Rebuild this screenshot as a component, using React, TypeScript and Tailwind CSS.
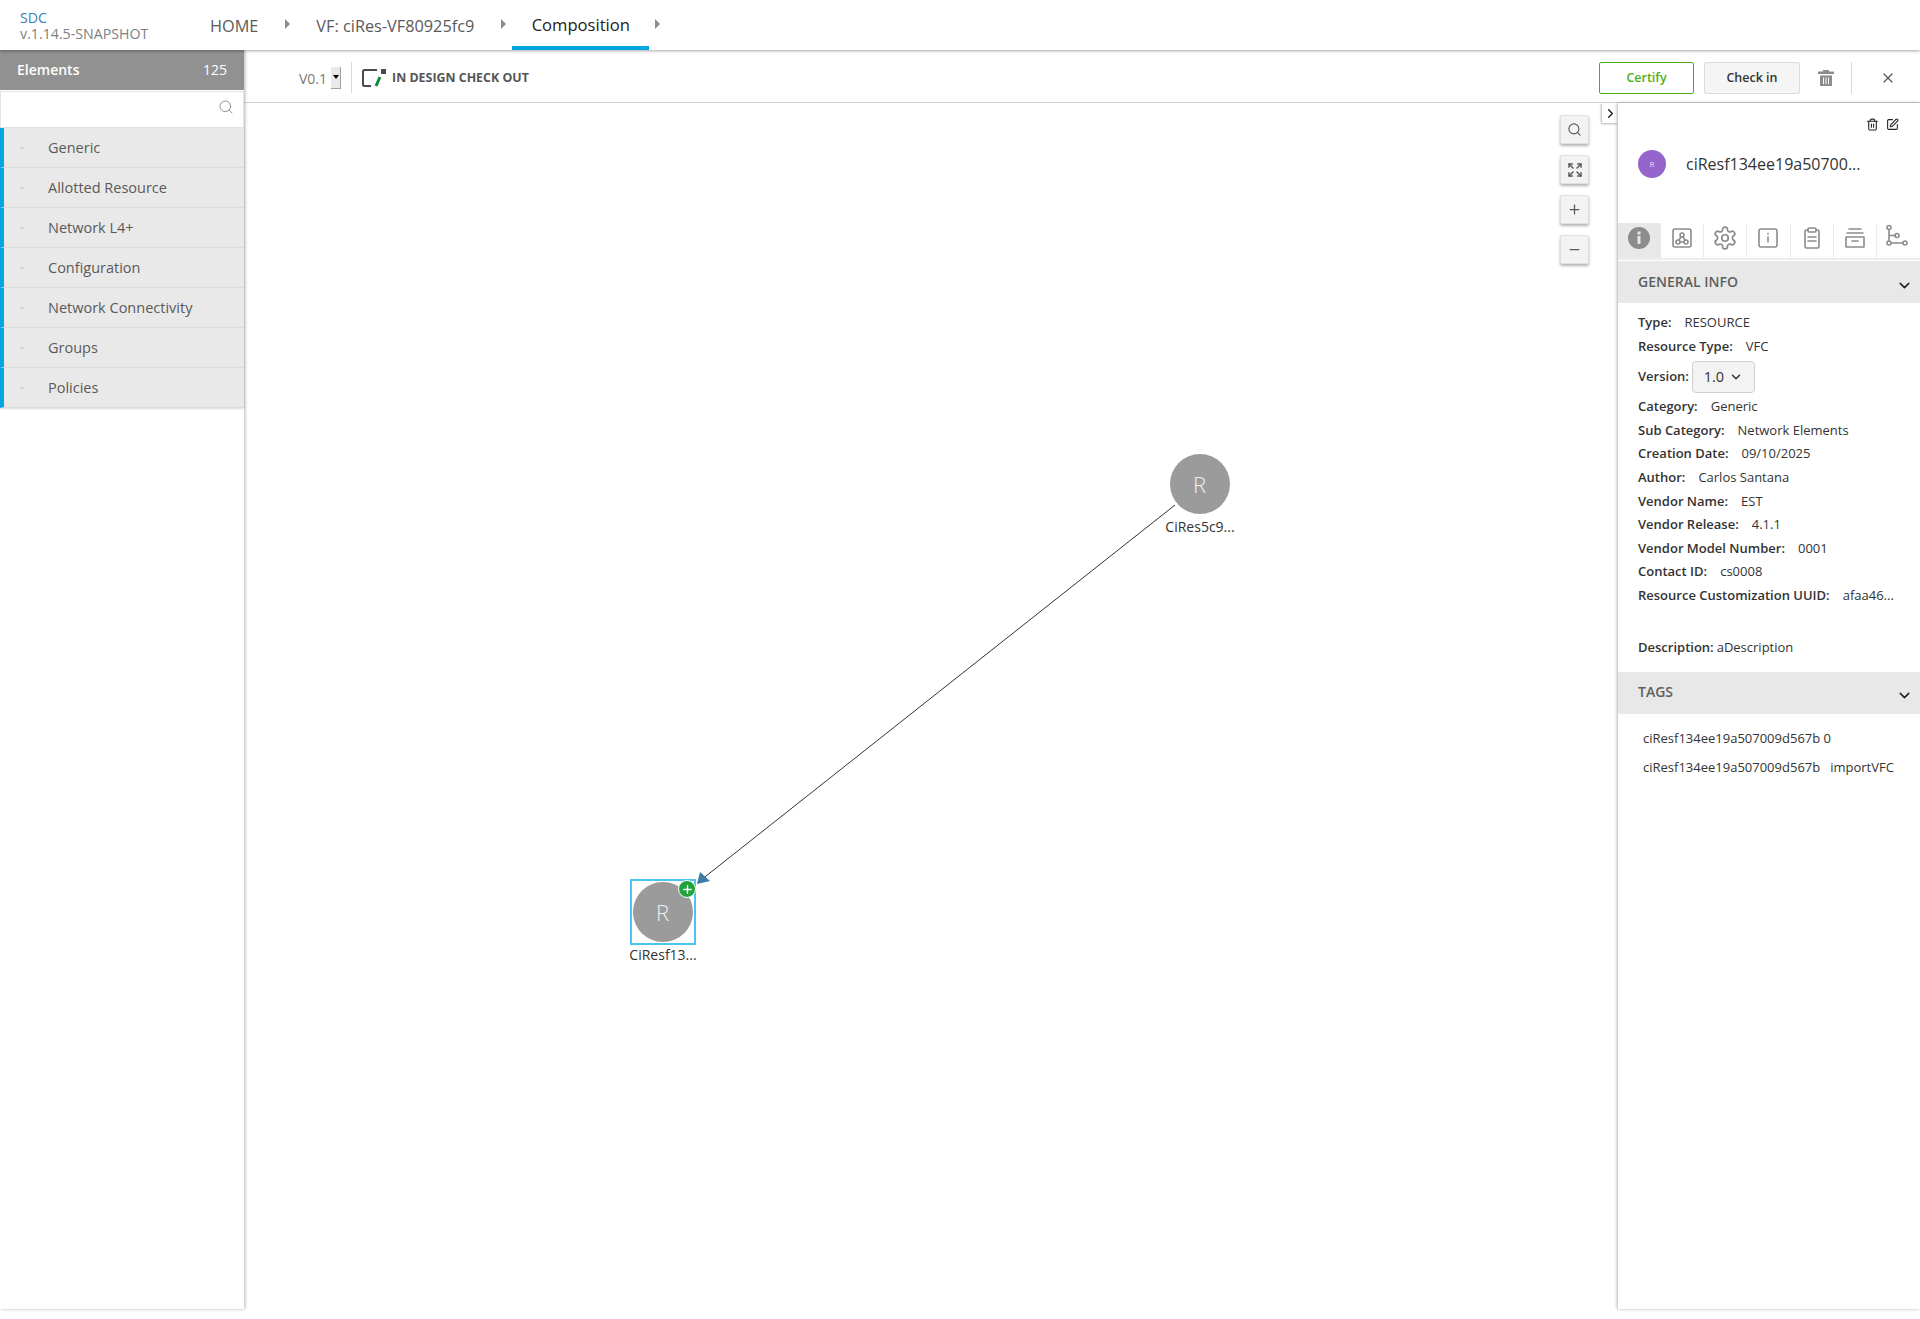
import { ChevronDown, ChevronRight, Search, Expand, Plus, Minus, Trash2, X, SquarePen } from "lucide-react";

const sections = ["Generic", "Allotted Resource", "Network L4+", "Configuration", "Network Connectivity", "Groups", "Policies"];

const info = [
  { label: "Type:", value: "RESOURCE" },
  { label: "Resource Type:", value: "VFC" },
  { label: "Version:", select: true },
  { label: "Category:", value: "Generic" },
  { label: "Sub Category:", value: "Network Elements" },
  { label: "Creation Date:", value: "09/10/2025" },
  { label: "Author:", value: "Carlos Santana" },
  { label: "Vendor Name:", value: "EST" },
  { label: "Vendor Release:", value: "4.1.1" },
  { label: "Vendor Model Number:", value: "0001" },
  { label: "Contact ID:", value: "cs0008" },
  { label: "Resource Customization UUID:", value: "afaa46..." },
];

function Caret() {
  return <span className="ml-[27px] mt-[-2px] h-0 w-0 border-y-[5px] border-l-[5px] border-y-transparent border-l-[#8c8c8c]"></span>;
}

function TabIcon({ children, size = 24 }: { children: React.ReactNode; size?: number }) {
  return (
    <svg width={size} height={size} viewBox="0 0 24 24" fill="none" stroke="#8c8c8c" strokeWidth="1.6" strokeLinecap="round" strokeLinejoin="round">
      {children}
    </svg>
  );
}

function ZoomButton({ children }: { children: React.ReactNode }) {
  return (
    <button className="flex h-[29px] w-[29px] items-center justify-center rounded-[2px] border border-[#e0e0e0] bg-[#f3f3f3] text-[#5a5a5a] shadow-[0_2px_3px_rgba(0,0,0,0.3)]">
      {children}
    </button>
  );
}

function SectionHeader({ title }: { title: string }) {
  return (
    <div className="flex h-[42px] items-center justify-between bg-[#e8e8e8] pl-5 pr-[7px]">
      <span className="mt-[-2px] text-[14px] font-semibold uppercase text-[#5f5f5f]">{title}</span>
      <ChevronDown className="mt-[6px] h-[17px] w-[17px] text-[#222222]" strokeWidth={2.2} />
    </div>
  );
}

function Node({ name, selected, className }: { name: string; selected?: boolean; className: string }) {
  return (
    <div className={`absolute flex w-[80px] flex-col items-center ${className}`}>
      <div className={`relative flex h-[66px] w-[66px] items-center justify-center ${selected ? "border-2 border-[#4cc4f2]" : ""}`}>
        <div className="flex h-[60px] w-[60px] items-center justify-center rounded-full bg-[#9b9b9b] pr-[1px] text-[22px] font-light text-[#f0f0f0]">R</div>
        {selected && (
          <span className="absolute right-[-2px] top-[-1px] flex h-[18px] w-[18px] items-center justify-center rounded-full border border-white bg-[#1fa33a] text-white">
            <Plus className="h-[13px] w-[13px]" strokeWidth={2.5} />
          </span>
        )}
      </div>
      <span className="text-[14px] leading-[20px] text-[#333333]">{name}</span>
    </div>
  );
}

export default function App() {
  return (
    <div className="flex h-[1319px] w-[1920px] flex-col overflow-hidden bg-white font-['Open_Sans',sans-serif] text-[13px] text-[#333333]">
      {/* top nav */}
      <header className="relative z-20 flex h-[50px] shrink-0 items-stretch bg-white shadow-[0_1px_3px_rgba(0,0,0,0.35)]">
        <div className="ml-5 w-[190px] pt-[10px] text-[14.2px] leading-[16px]">
          <div className="text-[#3b7fb8]">SDC</div>
          <div className="text-[#808080]">v.1.14.5-SNAPSHOT</div>
        </div>
        <div className="flex items-center text-[16.3px] text-[#5a5a5a]">
          <span className="mb-[-2px]">HOME</span>
          <Caret />
          <span className="mb-[-2px] ml-[26px]">VF: ciRes-VF80925fc9</span>
          <Caret />
        </div>
        <div className="ml-[6px] flex w-[137px] items-center justify-center border-b-4 border-[#00a4e0] pt-[5px] text-[16.6px] text-[#222222]">Composition</div>
        <div className="flex items-center">
          <span className="ml-[-21px]"></span>
          <Caret />
        </div>
      </header>

      <div className="flex min-h-0 flex-1 pb-[10px]">
        {/* elements palette */}
        <aside className="relative z-10 w-[244px] shrink-0 bg-white shadow-[1px_0_3px_rgba(0,0,0,0.3)]">
          <div className="flex h-[40px] items-center justify-between bg-[#919191] pb-[1px] pl-[17px] pr-[17px] text-[14px] font-semibold text-white">
            <span>Elements</span>
            <span className="font-normal">125</span>
          </div>
          <div className="mt-[1px] flex h-[37px] items-center justify-end border border-[#e4e4e4] bg-white pb-[6px] pr-[9px]">
            <Search className="h-[16px] w-[16px] text-[#8c8c8c]" strokeWidth={1.4} />
          </div>
          <div className="shadow-[0_1px_2px_rgba(0,0,0,0.15)]">
            {sections.map((s) => (
              <div key={s} className="flex h-[40px] items-center border-b border-l-4 border-b-[#dcdcdc] border-l-[#00a7e1] bg-[#e9e9e9] pl-[15px] text-[14.5px] text-[#5a5a5a]">
                <ChevronDown className="h-[6px] w-[6px] text-[#8c8c8c]" strokeWidth={2} />
                <span className="ml-[23px] font-medium">{s}</span>
              </div>
            ))}
          </div>
        </aside>

        <main className="flex min-w-0 flex-1 flex-col">
          {/* toolbar */}
          <div className="flex h-[53px] shrink-0 items-center border-b border-[#d2d2d2] bg-white pt-[3px]">
            <span className="ml-[55px] pt-[1px] text-[14px] text-[#7a7a7a]">V0.1</span>
            <span className="ml-[4px] flex h-[22px] w-[10px] items-center justify-center border-r border-b border-[#a0a0a0] bg-[#e9e9e9]">
              <span className="h-0 w-0 border-x-[3px] border-t-[4px] border-x-transparent border-t-black"></span>
            </span>
            <span className="ml-[10px] h-[31px] w-px bg-[#d8d8d8]"></span>
            <svg className="ml-[10px]" width="24" height="18" viewBox="0 0 24 18" fill="none">
              <path d="M9 17H2.5A1.5 1.5 0 0 1 1 15.5V2.5A1.5 1.5 0 0 1 2.5 1H15" stroke="#4a4a4a" strokeWidth="2" />
              <path d="M14 17l4-9" stroke="#0d8a3a" strokeWidth="3" />
              <rect x="19" y="0" width="5" height="5" fill="#4a4a4a" />
            </svg>
            <span className="ml-[6px] pt-[1px] text-[12.4px] font-bold text-[#555555]">IN DESIGN CHECK OUT</span>
            <button className="ml-auto h-[32px] w-[95px] rounded-[2px] border border-[#4caf1a] bg-white pt-[2px] text-[12.5px] font-semibold text-[#4caf1a]">Certify</button>
            <button className="ml-[10px] h-[32px] w-[96px] rounded-[2px] border border-[#dcdcdc] bg-[#f5f5f5] pt-[2px] text-[12.5px] font-semibold text-[#333333]">Check in</button>
            <svg className="ml-[17px]" width="18" height="18" viewBox="0 0 18 18" fill="#8c8c8c">
              <path d="M6 1h6v1.5h5V5H1V2.5h5z" />
              <path d="M3 6.5h12V17H3zM6 8.5v6.5h1V8.5zM8.5 8.5v6.5h1V8.5zM11 8.5v6.5h1V8.5z" fillRule="evenodd" />
            </svg>
            <span className="ml-[16px] h-[32px] w-px bg-[#d8d8d8]"></span>
            <X className="ml-[28px] mr-[24px] h-[16px] w-[16px] text-[#5a5a5a]" strokeWidth={1.8} />
          </div>

          <div className="flex min-h-0 flex-1">
            {/* canvas */}
            <div className="relative min-w-0 flex-1 bg-white">
              <svg className="absolute inset-0" width="1374" height="1206">
                <line x1="931" y1="402" x2="457" y2="777" stroke="#333333" strokeWidth="1" />
                <polygon points="453,781 456,769 466,778" fill="#3d7ea6" />
              </svg>
              <Node name="CiRes5c9..." className="left-[916px] top-[348px]" />
              <Node name="CiResf13..." selected className="left-[379px] top-[776px]" />
              <div className="absolute right-[29px] top-[12px] flex flex-col gap-[11px]">
                <ZoomButton><Search className="h-[15px] w-[15px]" strokeWidth={1.8} /></ZoomButton>
                <ZoomButton><Expand className="h-[16px] w-[16px]" strokeWidth={2.2} /></ZoomButton>
                <ZoomButton><Plus className="h-[15px] w-[15px]" strokeWidth={2} /></ZoomButton>
                <ZoomButton><Minus className="h-[15px] w-[15px]" strokeWidth={2} /></ZoomButton>
              </div>
              <div className="absolute right-0 top-0 flex h-[20px] w-[16px] items-center justify-center bg-white shadow-[-1px_1px_2px_rgba(0,0,0,0.3)]">
                <ChevronRight className="h-[15px] w-[15px] text-[#222222]" strokeWidth={2.2} />
              </div>
            </div>

            {/* details panel */}
            <section className="relative w-[302px] shrink-0 bg-white shadow-[-1px_0_3px_rgba(0,0,0,0.3)]">
              <div className="flex justify-end gap-[7px] pr-[21px] pt-[15px] text-[#222222]">
                <Trash2 className="h-[13px] w-[13px]" strokeWidth={2} />
                <SquarePen className="h-[13px] w-[13px]" strokeWidth={2} />
              </div>
              <div className="mt-[19px] flex items-center pl-[20px]">
                <div className="flex h-[28px] w-[28px] items-center justify-center rounded-full bg-[#9665cc] text-[8px] text-[#e8dcf5]">R</div>
                <span className="ml-[20px] text-[16px] text-[#333333]">ciResf134ee19a50700...</span>
              </div>
              <div className="mt-[45px] flex h-[37px] border-b-2 border-[#ececec]">
                <div className="flex w-[43px] justify-center bg-[#e8e8e8] pr-[1px] pt-[3px]">
                  <svg width="24" height="24" viewBox="0 0 24 24">
                    <circle cx="12" cy="12" r="11" fill="#8c8c8c" />
                    <rect x="10.5" y="10" width="3" height="8" fill="#e8e8e8" />
                    <rect x="10.5" y="5.5" width="3" height="3" fill="#e8e8e8" />
                  </svg>
                </div>
                <div className="flex w-[43px] justify-center border-r border-[#ececec] pt-[3px]">
                  <TabIcon>
                    <rect x="3" y="3" width="18" height="18" rx="2" />
                    <circle cx="12" cy="9" r="2" />
                    <circle cx="8" cy="16" r="2" />
                    <circle cx="16" cy="16" r="2" />
                    <path d="M11 11l-2 3M13 11l2 3M10 16h4" />
                  </TabIcon>
                </div>
                <div className="flex w-[43px] justify-center border-r border-[#ececec] pt-[2px]">
                  <TabIcon size={26}>
                    <path d="M12.22 2h-.44a2 2 0 0 0-2 2v.18a2 2 0 0 1-1 1.73l-.43.25a2 2 0 0 1-2 0l-.15-.08a2 2 0 0 0-2.73.73l-.22.38a2 2 0 0 0 .73 2.73l.15.1a2 2 0 0 1 1 1.72v.51a2 2 0 0 1-1 1.74l-.15.09a2 2 0 0 0-.73 2.73l.22.38a2 2 0 0 0 2.73.73l.15-.08a2 2 0 0 1 2 0l.43.25a2 2 0 0 1 1 1.73V20a2 2 0 0 0 2 2h.44a2 2 0 0 0 2-2v-.18a2 2 0 0 1 1-1.73l.43-.25a2 2 0 0 1 2 0l.15.08a2 2 0 0 0 2.73-.73l.22-.39a2 2 0 0 0-.73-2.73l-.15-.08a2 2 0 0 1-1-1.74v-.5a2 2 0 0 1 1-1.74l.15-.09a2 2 0 0 0 .73-2.73l-.22-.38a2 2 0 0 0-2.73-.73l-.15.08a2 2 0 0 1-2 0l-.43-.25a2 2 0 0 1-1-1.73V4a2 2 0 0 0-2-2z" />
                    <circle cx="12" cy="12" r="3" />
                  </TabIcon>
                </div>
                <div className="flex w-[44px] justify-center border-r border-[#ececec] pr-[2px] pt-[3px]">
                  <TabIcon>
                    <rect x="3" y="3" width="18" height="18" rx="2" />
                    <path d="M12 11v5M12 7.5v.5" />
                  </TabIcon>
                </div>
                <div className="flex w-[43px] justify-center border-r border-[#ececec] pr-[1px] pt-[3px]">
                  <TabIcon>
                    <path d="M8 4H6.5A1.5 1.5 0 0 0 5 5.5v15A1.5 1.5 0 0 0 6.5 22h11a1.5 1.5 0 0 0 1.5-1.5v-15A1.5 1.5 0 0 0 17.5 4H16" />
                    <rect x="8" y="2" width="8" height="4" rx="1" />
                    <path d="M8 11h8M8 15h8" />
                  </TabIcon>
                </div>
                <div className="flex w-[43px] justify-center border-r border-[#ececec] pt-[3px]">
                  <TabIcon>
                    <path d="M6 3h12M4 7h16M3 11h18v10H3zM9 15h6" />
                  </TabIcon>
                </div>
                <div className="flex w-[43px] justify-center pr-[6px] pt-[1px]">
                  <TabIcon>
                    <circle cx="5" cy="3.5" r="2" />
                    <circle cx="5" cy="19" r="2" />
                    <circle cx="13" cy="11.5" r="2" />
                    <circle cx="21" cy="19" r="2" />
                    <path d="M5 5.5v11.5M5 11.5h6M7 19h12" />
                  </TabIcon>
                </div>
              </div>
              <div className="h-[1px]"></div>
              <SectionHeader title="General Info" />
              <div className="pl-5 pt-[8px]">
                {info.map((row) =>
                  row.select ? (
                    <div key={row.label} className="flex h-[37px] items-center">
                      <span className="font-semibold">{row.label}</span>
                      <span className="ml-[3px] flex h-[32px] w-[63px] items-center justify-center gap-[5px] rounded-[4px] border border-[#cfcfcf] bg-[#f3f3f3] text-[14.5px]">
                        1.0
                        <ChevronDown className="h-[14px] w-[14px]" strokeWidth={2.6} />
                      </span>
                    </div>
                  ) : (
                    <div key={row.label} className="flex h-[23.6px] items-center">
                      <span className="font-semibold">{row.label}</span>
                      <span className="ml-[13px]">{row.value}</span>
                    </div>
                  )
                )}
                <div className="mt-[28px] flex h-[24px] items-center">
                  <span className="font-semibold">Description:</span>
                  <span className="ml-[3px]">aDescription</span>
                </div>
              </div>
              <div className="mt-[12px]">
                <SectionHeader title="Tags" />
              </div>
              <div className="pl-[25px] pt-[12px]">
                <div className="h-[29px] leading-[24px]">ciResf134ee19a507009d567b 0</div>
                <div className="flex h-[29px] leading-[24px]">
                  <span>ciResf134ee19a507009d567b</span>
                  <span className="ml-[10px]">importVFC</span>
                </div>
              </div>
            </section>
          </div>
        </main>
      </div>
    </div>
  );
}
